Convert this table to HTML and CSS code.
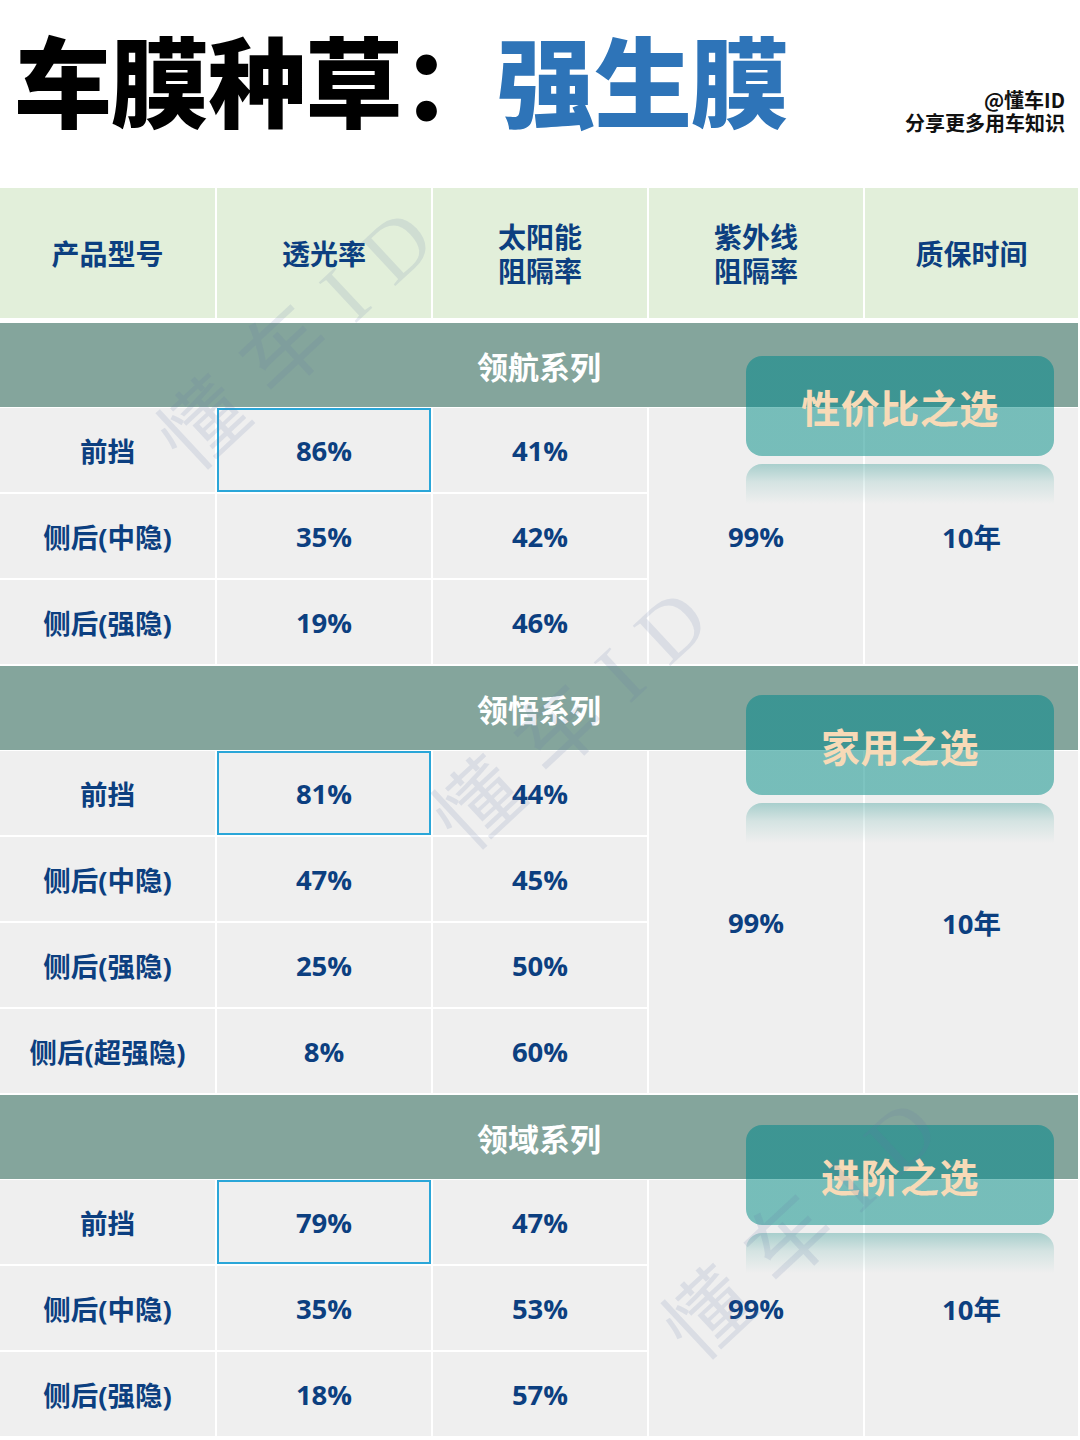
FILE: index.html
```html
<!DOCTYPE html>
<html lang="zh-CN">
<head>
<meta charset="utf-8">
<title>车膜种草：强生膜</title>
<link rel="stylesheet" href="styles.css">
</head>
<body>
<div class="page">
  <header class="top">
    <h1 class="title">车膜种草：<span class="brand">强生膜</span></h1>
    <div class="credit">
      <div class="cline">@懂车ID</div>
      <div class="cline">分享更多用车知识</div>
    </div>
  </header>

  <div class="table">
    <div class="head">
      <div class="hcell">产品型号</div>
      <div class="hcell">透光率</div>
      <div class="hcell"><div class="hl1">太阳能</div><div class="hl1">阻隔率</div></div>
      <div class="hcell"><div class="hl1">紫外线</div><div class="hl1">阻隔率</div></div>
      <div class="hcell">质保时间</div>
    </div>

    <section class="series">
      <div class="series-bar">领航系列</div>
      <div class="rows rows3">
        <div class="cell">前挡</div>
        <div class="cell hl">86%</div>
        <div class="cell">41%</div>
        <div class="cell span">99%</div>
        <div class="cell span">10年</div>
        <div class="cell">侧后(中隐)</div>
        <div class="cell">35%</div>
        <div class="cell">42%</div>
        <div class="cell">侧后(强隐)</div>
        <div class="cell">19%</div>
        <div class="cell">46%</div>
      </div>
      <div class="badge b1">性价比之选</div>
      <div class="reflect r1"></div>
    </section>

    <section class="series">
      <div class="series-bar">领悟系列</div>
      <div class="rows rows4">
        <div class="cell">前挡</div>
        <div class="cell hl">81%</div>
        <div class="cell">44%</div>
        <div class="cell span">99%</div>
        <div class="cell span">10年</div>
        <div class="cell">侧后(中隐)</div>
        <div class="cell">47%</div>
        <div class="cell">45%</div>
        <div class="cell">侧后(强隐)</div>
        <div class="cell">25%</div>
        <div class="cell">50%</div>
        <div class="cell">侧后(超强隐)</div>
        <div class="cell">8%</div>
        <div class="cell">60%</div>
      </div>
      <div class="badge b2">家用之选</div>
      <div class="reflect r2"></div>
    </section>

    <section class="series">
      <div class="series-bar">领域系列</div>
      <div class="rows rows3">
        <div class="cell">前挡</div>
        <div class="cell hl">79%</div>
        <div class="cell">47%</div>
        <div class="cell span">99%</div>
        <div class="cell span">10年</div>
        <div class="cell">侧后(中隐)</div>
        <div class="cell">35%</div>
        <div class="cell">53%</div>
        <div class="cell">侧后(强隐)</div>
        <div class="cell">18%</div>
        <div class="cell">57%</div>
      </div>
      <div class="badge b3">进阶之选</div>
      <div class="reflect r3"></div>
    </section>
  </div>

  <div class="wm wm1">懂车ID</div>
  <div class="wm wm2">懂车ID</div>
  <div class="wm wm3">懂车ID</div>
</div>
</body>
</html>
```

FILE: styles.css
```css
* { box-sizing: border-box; }
html, body { margin: 0; padding: 0; background: #ffffff; }
body {
  font-family: "Noto Sans CJK SC", "Noto Sans", sans-serif;
  width: 1080px;
  height: 1440px;
  overflow: hidden;
}
.page { position: relative; width: 1080px; height: 1440px; overflow: hidden; }

.top {
  height: 188px;
  display: flex;
  align-items: flex-start;
  justify-content: space-between;
  padding: 0 15px 0 14px;
}
.title {
  margin: 6px 0 0 0;
  font-family: "Noto Sans CJK SC", sans-serif;
  font-weight: 900;
  font-size: 98px;
  line-height: 142px;
  color: #000000;
  letter-spacing: -1px;
  white-space: nowrap;
}
.brand { color: #2e74b8; margin-left: -2px; }
.credit {
  margin-top: 88px;
  text-align: right;
  font-family: "Noto Sans CJK SC", sans-serif;
  font-weight: 700;
  font-size: 20px;
  color: #111111;
}
.cline { height: 23px; line-height: 23px; }

.table { width: 1078px; }
.head, .rows {
  display: grid;
  grid-template-columns: 215px 214px 214px 214px 1fr;
  column-gap: 2px;
}
.head { height: 130px; margin-bottom: 5px; }
.hcell {
  background: #e2efda;
  display: flex;
  flex-direction: column;
  align-items: center;
  justify-content: center;
  text-align: center;
  font-weight: 700;
  font-size: 28px;
  line-height: 34px;
  color: #0c3f80;
}
.hl1 { height: 34px; line-height: 34px; }

.series { position: relative; margin-bottom: 2px; }
.series-bar {
  height: 84px;
  background: #84a59c;
  color: #ffffff;
  font-weight: 700;
  font-size: 31px;
  display: flex;
  align-items: center;
  justify-content: center;
  margin-bottom: 1px;
}
.rows { row-gap: 2px; grid-auto-rows: 84px; }
.cell {
  background: #efefef;
  display: flex;
  align-items: center;
  justify-content: center;
  font-family: "Open Sans", "Noto Sans CJK SC", sans-serif;
  font-weight: 700;
  font-size: 27.5px;
  color: #0c3f80;
  white-space: nowrap;
}
.cell.hl { border: 2px solid #2aa6d8; }
.rows3 .span { grid-row: 1 / span 3; }
.rows4 .span { grid-row: 1 / span 4; }
.rows3 .span:nth-child(4), .rows4 .span:nth-child(4) { grid-column: 4; }
.rows3 .span:nth-child(5), .rows4 .span:nth-child(5) { grid-column: 5; }

.badge {
  position: absolute;
  left: 746px;
  width: 308px;
  height: 100px;
  border-radius: 16px;
  background: linear-gradient(to bottom,
    rgba(46,146,145,0.82) 0,
    rgba(46,146,145,0.82) var(--split),
    rgba(38,156,150,0.6) var(--split),
    rgba(38,156,150,0.6) 100%);
  color: #f7dab7;
  font-weight: 700;
  font-size: 39px;
  display: flex;
  align-items: center;
  justify-content: center;
  letter-spacing: 0.5px;
}
.b1 { top: 33px; --split: 51px; }
.b2 { top: 29px; --split: 55px; }
.b3 { top: 30px; --split: 54px; }
.reflect {
  position: absolute;
  left: 746px;
  width: 308px;
  height: 40px;
  border-radius: 16px 16px 0 0;
  background: linear-gradient(to bottom, rgba(110,180,176,0.55) 0, rgba(150,200,196,0.3) 45%, rgba(240,240,240,0) 100%);
}
.r1 { top: 141px; }
.r2 { top: 137px; }
.r3 { top: 138px; }

.wm {
  position: absolute;
  font-family: "Liberation Serif", "Noto Sans CJK SC", serif;
  font-weight: 400;
  font-size: 84px;
  letter-spacing: 26px;
  color: rgba(100, 120, 165, 0.15);
  white-space: nowrap;
  transform: translate(-50%, -50%) rotate(-43deg);
  pointer-events: none;
}
.wm1 { left: 300px; top: 325px; }
.wm2 { left: 575px; top: 705px; }
.wm3 { left: 805px; top: 1215px; }
```
